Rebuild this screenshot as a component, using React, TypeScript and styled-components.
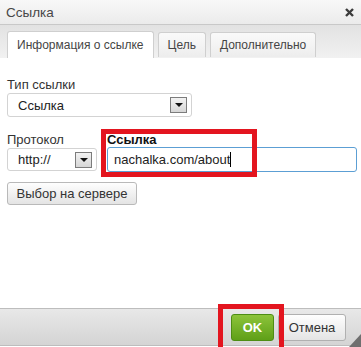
import React from 'react'
import styled, { createGlobalStyle } from 'styled-components'

const Global = createGlobalStyle`
  html, body { margin: 0; padding: 0; background: #fff; }
  body { font-family: "Liberation Sans", Arial, sans-serif; }
`

const Dialog = styled.div`
  position: relative;
  width: 361px;
  height: 347px;
  display: flex;
  flex-direction: column;
  background: #fff;
  overflow: hidden;
`

const TitleBar = styled.div`
  height: 24px;
  flex: none;
  display: flex;
  align-items: center;
  justify-content: space-between;
  padding: 0 7px 0 6px;
  background: linear-gradient(#f8f8f8, #ebebeb);
  border-bottom: 1px solid #c8c8c8;
  color: #474747;
  font-size: 13.5px;
`

const TabBar = styled.div`
  height: 33px;
  flex: none;
  display: flex;
  align-items: flex-end;
  gap: 4px;
  padding-left: 7px;
  background: linear-gradient(#e2e2e2, #f1f1f1);
`

const Tab = styled.div<{ $active?: boolean }>`
  height: ${p => (p.$active ? '27px' : '25px')};
  margin-bottom: ${p => (p.$active ? '0' : '1px')};
  padding: 0 9px;
  display: flex;
  align-items: center;
  box-sizing: border-box;
  border: 1px solid #cfcfcf;
  border-bottom: none;
  border-radius: 3px 3px 0 0;
  background: ${p => (p.$active ? '#fff' : 'linear-gradient(#fafafa, #ededed)')};
  color: #454545;
  font-size: 12px;
`

const Content = styled.div`
  flex: 1;
  padding: 20px 7px 0;
`

const Label = styled.div<{ $bold?: boolean }>`
  font-size: 13px;
  line-height: 14px;
  color: ${p => (p.$bold ? '#111' : '#333')};
  font-weight: ${p => (p.$bold ? 'bold' : 'normal')};
`

const Select = styled.div<{ $w: number; $h: number }>`
  width: ${p => p.$w}px;
  height: ${p => p.$h}px;
  margin-top: 1px;
  box-sizing: border-box;
  border: 1px solid #d3d3d3;
  border-radius: 3px;
  display: flex;
  align-items: center;
  justify-content: space-between;
  padding: 0 4px 0 10px;
  font-size: 13px;
  color: #222;
  background: #fff;
`

const Arrow = styled.div`
  width: 17px;
  height: 16px;
  box-sizing: border-box;
  border: 1px solid #7c7c7c;
  background: linear-gradient(#f2f2f2, #d6d6d6);
  display: flex;
  align-items: center;
  justify-content: center;
  &::after {
    content: '';
    border-left: 4px solid transparent;
    border-right: 4px solid transparent;
    border-top: 4px solid #111;
  }
`

const Row = styled.div`
  display: flex;
  gap: 10px;
  margin-top: 16px;
`

const Input = styled.div`
  width: 250px;
  height: 25px;
  box-sizing: border-box;
  border: 1px solid #5c9fd4;
  border-radius: 3px;
  padding-left: 6px;
  display: flex;
  align-items: center;
  font-size: 13px;
  color: #222;
`

const Caret = styled.span`
  display: inline-block;
  width: 1px;
  height: 15px;
  background: #000;
`

const Button = styled.div`
  display: inline-flex;
  align-items: center;
  justify-content: center;
  box-sizing: border-box;
  border: 1px solid #b9b9b9;
  border-radius: 3px;
  background: linear-gradient(#fefefe, #e4e4e4);
  font-size: 13px;
  color: #333;
`

const ServerButton = styled(Button)`
  width: 130px;
  height: 23px;
  margin-top: 10px;
`

const Footer = styled.div`
  height: 38px;
  flex: none;
  margin-bottom: 1px;
  box-sizing: border-box;
  border-top: 1px solid #bdbdbd;
  border-bottom: 1px solid #bdbdbd;
  background: linear-gradient(#e8e8e8, #d4d4d4);
  display: flex;
  align-items: center;
  justify-content: flex-end;
  gap: 4px;
  padding-right: 15px;
`

const OkButton = styled(Button)`
  width: 43px;
  height: 27px;
  border-color: #4d8d14;
  background: linear-gradient(#8cc43a, #5f9f18);
  color: #fff;
  font-weight: bold;
`

const CancelButton = styled(Button)`
  width: 68px;
  height: 27px;
  border-color: #b0b0b0;
`

const Highlight = styled.div<{ $l: number; $t: number; $w: number; $h: number }>`
  position: absolute;
  left: ${p => p.$l}px;
  top: ${p => p.$t}px;
  width: ${p => p.$w}px;
  height: ${p => p.$h}px;
  box-sizing: border-box;
  border: 5px solid #e3151f;
  pointer-events: none;
`

const Grip = styled.svg`
  position: absolute;
  right: 0;
  bottom: 0;
`

export default function App() {
  return (
    <Dialog>
      <Global />
      <TitleBar>
        <span>Ссылка</span>
        <svg width="9" height="9" viewBox="0 0 9 9">
          <path d="M1 1L8 8M8 1L1 8" stroke="#3c3c3c" strokeWidth="2.4" />
        </svg>
      </TitleBar>
      <TabBar>
        <Tab $active>Информация о ссылке</Tab>
        <Tab>Цель</Tab>
        <Tab>Дополнительно</Tab>
      </TabBar>
      <Content>
        <Label>Тип ссылки</Label>
        <Select $w={185} $h={24}>
          Ссылка
          <Arrow />
        </Select>
        <Row>
          <div>
            <Label>Протокол</Label>
            <Select $w={90} $h={23}>
              http://
              <Arrow />
            </Select>
          </div>
          <div>
            <Label $bold>Ссылка</Label>
            <Input>
              nachalka.com/about
              <Caret />
            </Input>
          </div>
        </Row>
        <ServerButton>Выбор на сервере</ServerButton>
      </Content>
      <Footer>
        <OkButton>OK</OkButton>
        <CancelButton>Отмена</CancelButton>
      </Footer>
      <Highlight $l={101} $t={129} $w={156} $h={48} />
      <Highlight $l={218} $t={304} $w={66} $h={50} />
      <Grip width="12" height="13" viewBox="0 0 12 13">
        <polygon points="12,0 12,13 0,13" fill="#6f6f6f" />
      </Grip>
    </Dialog>
  )
}
